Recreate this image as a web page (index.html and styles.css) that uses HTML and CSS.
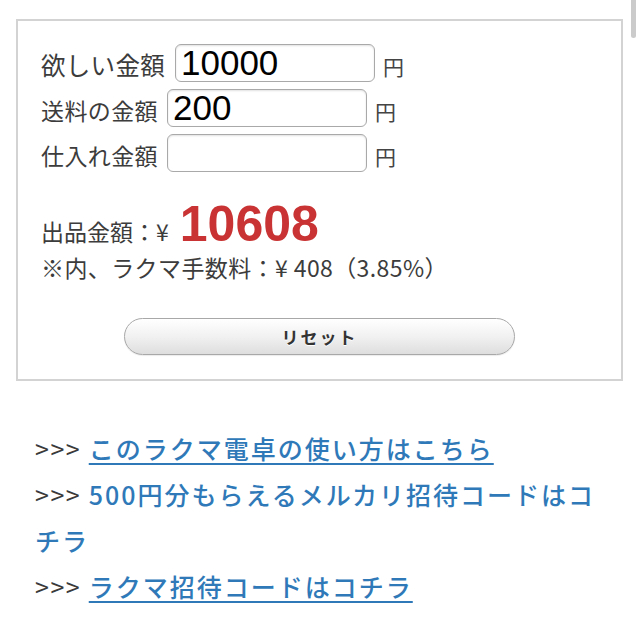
FILE: index.html
```html
<!DOCTYPE html>
<html lang="ja">
<head>
<meta charset="utf-8">
<title>ラクマ電卓</title>
<link rel="stylesheet" href="styles.css">
</head>
<body>
<div class="scroll-thumb"></div>
<div class="page">
  <div class="calc">
    <div class="rows">
      <div class="row row-main">
        <span class="label">欲しい金額</span>
        <input class="field" type="text" value="10000">
        <span class="yen">円</span>
      </div>
      <div class="row">
        <span class="label">送料の金額</span>
        <input class="field" type="text" value="200">
        <span class="yen">円</span>
      </div>
      <div class="row">
        <span class="label">仕入れ金額</span>
        <input class="field" type="text" value="">
        <span class="yen">円</span>
      </div>
    </div>
    <div class="result">
      <div class="total">出品金額：¥<span class="num">10608</span></div>
      <div class="fee">※内、ラクマ手数料：¥ 408（3.85%）</div>
    </div>
    <div class="actions">
      <button class="reset" type="button">リセット</button>
    </div>
  </div>
  <div class="links">
    <p class="link-line"><span class="arrows">&gt;&gt;&gt;</span> <a class="link" href="#">このラクマ電卓の使い方はこちら</a></p>
    <p class="link-line"><span class="arrows">&gt;&gt;&gt;</span> <a class="link plain" href="#">500円分もらえるメルカリ招待コードはコチラ</a></p>
    <p class="link-line"><span class="arrows">&gt;&gt;&gt;</span> <a class="link" href="#">ラクマ招待コードはコチラ</a></p>
  </div>
</div>
</body>
</html>
```

FILE: styles.css
```css
html, body {
  margin: 0;
  padding: 0;
  background: #ffffff;
}

body {
  font-family: "Noto Sans CJK JP", "Noto Sans", sans-serif;
  color: #3c3c3c;
  width: 640px;
  height: 640px;
  overflow: hidden;
  position: relative;
}

.scroll-thumb {
  position: absolute;
  top: 0;
  left: 631px;
  width: 5px;
  height: 38px;
  border-radius: 0 0 3px 3px;
  background: #cbcbcb;
}

.page {
  padding: 19px 0 0 16px;
}

.calc {
  width: 580px;
  border: 2px solid #d3d3d3;
  padding: 23px 0 24px 23px;
  box-sizing: content-box;
}

.rows {
  display: flex;
  flex-direction: column;
  gap: 7px;
}

.row {
  display: flex;
  align-items: baseline;
  height: 38px;
}

.label {
  font-size: 23px;
  letter-spacing: 0.4px;
  line-height: 30px;
  margin-right: 9px;
  color: #3c3c3c;
}

.row-main .label {
  font-size: 24.5px;
  letter-spacing: 0.3px;
  margin-right: 10px;
}

.field {
  width: 200px;
  height: 38px;
  box-sizing: border-box;
  border: 1px solid #a9a9a9;
  border-radius: 6px;
  padding: 0 5px;
  font-family: "Liberation Sans", Arial, sans-serif;
  font-size: 35px;
  color: #000;
  background: #fff;
  box-shadow: inset 0 1px 2px rgba(0, 0, 0, 0.12);
  outline: none;
}

.yen {
  font-size: 21px;
  margin-left: 8px;
  color: #444;
}

.result {
  margin-top: 32px;
}

.total {
  font-size: 23px;
  line-height: 40px;
}

.num {
  font-family: "Liberation Sans", Arial, sans-serif;
  font-weight: bold;
  font-size: 50px;
  line-height: 40px;
  color: #c93333;
  margin-left: 11px;
}

.fee {
  font-size: 23px;
  line-height: 32px;
  letter-spacing: 0.4px;
}

.actions {
  display: flex;
  justify-content: center;
  margin-top: 35px;
  padding-right: 23px;
}

.reset {
  width: 391px;
  height: 37px;
  border: 1px solid #a8a8a8;
  border-radius: 19px;
  background: linear-gradient(to bottom, #ffffff 0%, #f1f1f1 50%, #dedede 100%);
  font-family: "Noto Sans CJK JP", sans-serif;
  font-weight: bold;
  font-size: 17px;
  letter-spacing: 2px;
  color: #333;
  text-shadow: 0 1px 0 #fff;
  padding: 0;
  box-shadow: 0 1px 1px rgba(0, 0, 0, 0.08);
}

.links {
  margin-top: 44px;
  padding: 0 24px 0 19px;
}

.link-line {
  margin: 0;
  font-size: 25px;
  line-height: 46px;
  color: #3a3a3a;
  letter-spacing: 2px;
}

.arrows {
  letter-spacing: 1.5px;
  font-weight: 400;
}

.link {
  color: #2f79b9;
  font-weight: 500;
  text-decoration: underline;
  text-decoration-thickness: 2px;
  text-underline-offset: 4px;
}

.link.plain {
  text-decoration: none;
}
```
